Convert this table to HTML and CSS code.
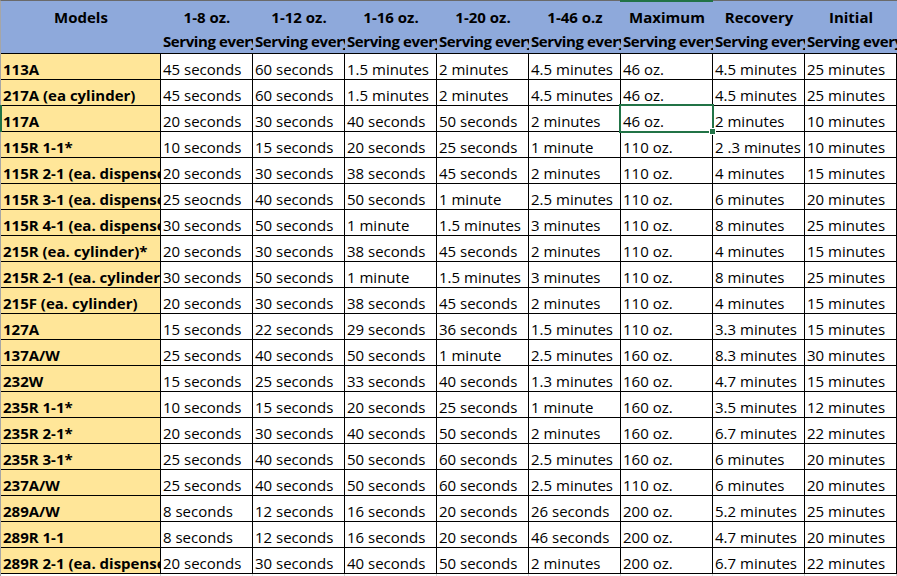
FILE: index.html
```html
<!DOCTYPE html>
<html>
<head>
<meta charset="utf-8">
<link rel="stylesheet" href="styles.css">
</head>
<body>
<div class="sheet">
  <div class="grid">
    <div class="h1 c-a">Models</div>
    <div class="h1">1-8 oz.</div>
    <div class="h1">1-12 oz.</div>
    <div class="h1">1-16 oz.</div>
    <div class="h1">1-20 oz.</div>
    <div class="h1">1-46 o.z</div>
    <div class="h1">Maximum</div>
    <div class="h1">Recovery</div>
    <div class="h1">Initial</div>

    <div class="h2"></div>
    <div class="h2">Serving every</div>
    <div class="h2">Serving every</div>
    <div class="h2">Serving every</div>
    <div class="h2">Serving every</div>
    <div class="h2">Serving every</div>
    <div class="h2">Serving every</div>
    <div class="h2">Serving every</div>
    <div class="h2">Serving every</div>

    <div class="m">113A</div><div class="d">45 seconds</div><div class="d">60 seconds</div><div class="d">1.5 minutes</div><div class="d">2 minutes</div><div class="d">4.5 minutes</div><div class="d">46 oz.</div><div class="d">4.5 minutes</div><div class="d">25 minutes</div>
    <div class="m">217A (ea cylinder)</div><div class="d">45 seconds</div><div class="d">60 seconds</div><div class="d">1.5 minutes</div><div class="d">2 minutes</div><div class="d">4.5 minutes</div><div class="d">46 oz.</div><div class="d">4.5 minutes</div><div class="d">25 minutes</div>
    <div class="m">117A</div><div class="d">20 seconds</div><div class="d">30 seconds</div><div class="d">40 seconds</div><div class="d">50 seconds</div><div class="d">2 minutes</div><div class="d">46 oz.</div><div class="d">2 minutes</div><div class="d">10 minutes</div>
    <div class="m">115R 1-1*</div><div class="d">10 seconds</div><div class="d">15 seconds</div><div class="d">20 seconds</div><div class="d">25 seconds</div><div class="d">1 minute</div><div class="d">110 oz.</div><div class="d">2 .3 minutes</div><div class="d">10 minutes</div>
    <div class="m">115R 2-1 (ea. dispenser)</div><div class="d">20 seconds</div><div class="d">30 seconds</div><div class="d">38 seconds</div><div class="d">45 seconds</div><div class="d">2 minutes</div><div class="d">110 oz.</div><div class="d">4 minutes</div><div class="d">15 minutes</div>
    <div class="m">115R 3-1 (ea. dispenser)</div><div class="d">25 seocnds</div><div class="d">40 seconds</div><div class="d">50 seconds</div><div class="d">1 minute</div><div class="d">2.5 minutes</div><div class="d">110 oz.</div><div class="d">6 minutes</div><div class="d">20 minutes</div>
    <div class="m">115R 4-1 (ea. dispenser)</div><div class="d">30 seconds</div><div class="d">50 seconds</div><div class="d">1 minute</div><div class="d">1.5 minutes</div><div class="d">3 minutes</div><div class="d">110 oz.</div><div class="d">8 minutes</div><div class="d">25 minutes</div>
    <div class="m">215R (ea. cylinder)*</div><div class="d">20 seconds</div><div class="d">30 seconds</div><div class="d">38 seconds</div><div class="d">45 seconds</div><div class="d">2 minutes</div><div class="d">110 oz.</div><div class="d">4 minutes</div><div class="d">15 minutes</div>
    <div class="m">215R 2-1 (ea. cylinder)</div><div class="d">30 seconds</div><div class="d">50 seconds</div><div class="d">1 minute</div><div class="d">1.5 minutes</div><div class="d">3 minutes</div><div class="d">110 oz.</div><div class="d">8 minutes</div><div class="d">25 minutes</div>
    <div class="m">215F (ea. cylinder)</div><div class="d">20 seconds</div><div class="d">30 seconds</div><div class="d">38 seconds</div><div class="d">45 seconds</div><div class="d">2 minutes</div><div class="d">110 oz.</div><div class="d">4 minutes</div><div class="d">15 minutes</div>
    <div class="m">127A</div><div class="d">15 seconds</div><div class="d">22 seconds</div><div class="d">29 seconds</div><div class="d">36 seconds</div><div class="d">1.5 minutes</div><div class="d">110 oz.</div><div class="d">3.3 minutes</div><div class="d">15 minutes</div>
    <div class="m">137A/W</div><div class="d">25 seconds</div><div class="d">40 seconds</div><div class="d">50 seconds</div><div class="d">1 minute</div><div class="d">2.5 minutes</div><div class="d">160 oz.</div><div class="d">8.3 minutes</div><div class="d">30 minutes</div>
    <div class="m">232W</div><div class="d">15 seconds</div><div class="d">25 seconds</div><div class="d">33 seconds</div><div class="d">40 seconds</div><div class="d">1.3 minutes</div><div class="d">160 oz.</div><div class="d">4.7 minutes</div><div class="d">15 minutes</div>
    <div class="m">235R 1-1*</div><div class="d">10 seconds</div><div class="d">15 seconds</div><div class="d">20 seconds</div><div class="d">25 seconds</div><div class="d">1 minute</div><div class="d">160 oz.</div><div class="d">3.5 minutes</div><div class="d">12 minutes</div>
    <div class="m">235R 2-1*</div><div class="d">20 seconds</div><div class="d">30 seconds</div><div class="d">40 seconds</div><div class="d">50 seconds</div><div class="d">2 minutes</div><div class="d">160 oz.</div><div class="d">6.7 minutes</div><div class="d">22 minutes</div>
    <div class="m">235R 3-1*</div><div class="d">25 seconds</div><div class="d">40 seconds</div><div class="d">50 seconds</div><div class="d">60 seconds</div><div class="d">2.5 minutes</div><div class="d">160 oz.</div><div class="d">6 minutes</div><div class="d">20 minutes</div>
    <div class="m">237A/W</div><div class="d">25 seconds</div><div class="d">40 seconds</div><div class="d">50 seconds</div><div class="d">60 seconds</div><div class="d">2.5 minutes</div><div class="d">110 oz.</div><div class="d">6 minutes</div><div class="d">20 minutes</div>
    <div class="m">289A/W</div><div class="d">8 seconds</div><div class="d">12 seconds</div><div class="d">16 seconds</div><div class="d">20 seconds</div><div class="d">26 seconds</div><div class="d">200 oz.</div><div class="d">5.2 minutes</div><div class="d">25 minutes</div>
    <div class="m">289R 1-1</div><div class="d">8 seconds</div><div class="d">12 seconds</div><div class="d">16 seconds</div><div class="d">20 seconds</div><div class="d">46 seconds</div><div class="d">200 oz.</div><div class="d">4.7 minutes</div><div class="d">20 minutes</div>
    <div class="m">289R 2-1 (ea. dispenser)</div><div class="d">20 seconds</div><div class="d">30 seconds</div><div class="d">40 seconds</div><div class="d">50 seconds</div><div class="d">2 minutes</div><div class="d">200 oz.</div><div class="d">6.7 minutes</div><div class="d">22 minutes</div>

    <div class="f"></div><div class="f"></div><div class="f"></div><div class="f"></div><div class="f"></div><div class="f"></div><div class="f"></div><div class="f"></div><div class="f"></div>
  </div>
  <div class="col-mark"></div>
  <div class="row-mark"></div>
  <div class="selection"><span class="handle"></span></div>
</div>
</body>
</html>
```

FILE: styles.css
```css
html, body {
  margin: 0;
  padding: 0;
  background: #ffffff;
}
.sheet {
  position: relative;
  width: 897px;
  height: 576px;
  overflow: hidden;
  font-family: "Open Sans", "Liberation Sans", sans-serif;
  font-size: 15px;
  color: #000;
}
.grid {
  display: grid;
  grid-template-columns: 160px repeat(8, 92px);
  grid-template-rows: 26px 27px repeat(20, 26px) 10px;
  border-top: 1px solid #6a6a6a;
  border-left: 1px solid #a6a6a6;
  width: 896px;
}
.grid > div {
  box-sizing: border-box;
  overflow: hidden;
  white-space: nowrap;
  display: flex;
  align-items: flex-end;
  line-height: 20px;
}
.h1, .h2 {
  background: #8ea9db;
  font-weight: 700;
}
.h1 {
  justify-content: center;
  padding-bottom: 0;
}
.h2 {
  border-bottom: 1px solid #000;
  padding-left: 2px;
  padding-bottom: 2px;
  letter-spacing: -0.4px;
}
.m, .d {
  border-right: 1px solid #000;
  border-bottom: 1px solid #000;
  padding-left: 2px;
  padding-bottom: 0;
}
.m {
  background: #ffe699;
  font-weight: 700;
}
.d {
  background: #fff;
}
.f {
  border-right: 1px solid #d4d4d4;
}
.col-mark {
  position: absolute;
  left: 620px;
  top: 0;
  width: 93px;
  height: 2px;
  background: #217346;
}
.row-mark {
  position: absolute;
  left: 0;
  top: 105px;
  width: 2px;
  height: 27px;
  background: #217346;
}
.selection {
  position: absolute;
  left: 619px;
  top: 104px;
  width: 95px;
  height: 29px;
  box-sizing: border-box;
  border: 2px solid #217346;
}
.handle {
  position: absolute;
  right: -4px;
  bottom: -4px;
  width: 5px;
  height: 5px;
  background: #217346;
  border: 1px solid #fff;
}
```
